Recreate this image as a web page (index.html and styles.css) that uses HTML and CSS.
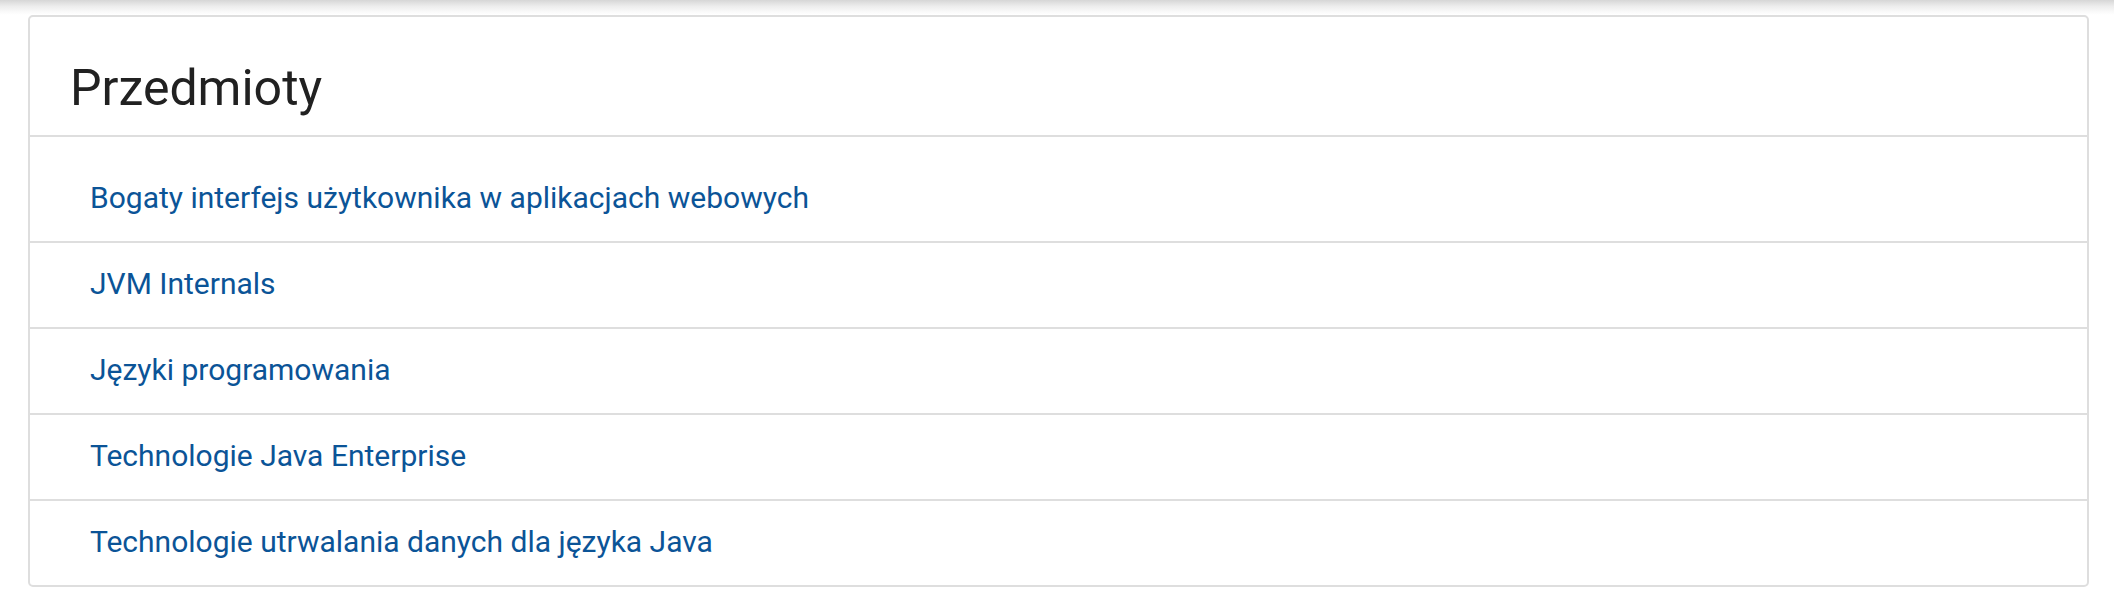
FILE: index.html
```html
<!DOCTYPE html>
<html lang="pl">
<head>
<meta charset="utf-8">
<title>Przedmioty</title>
<link rel="stylesheet" href="styles.css">
</head>
<body>
<div class="topshade"></div>
<main class="page">
  <section class="card">
    <header class="card-header">
      <h3 class="card-title">Przedmioty</h3>
    </header>
    <ul class="list">
      <li class="list-item"><a class="list-link" href="#">Bogaty interfejs użytkownika w aplikacjach webowych</a></li>
      <li class="list-item"><a class="list-link" href="#">JVM Internals</a></li>
      <li class="list-item"><a class="list-link" href="#">Języki programowania</a></li>
      <li class="list-item"><a class="list-link" href="#">Technologie Java Enterprise</a></li>
      <li class="list-item"><a class="list-link" href="#">Technologie utrwalania danych dla języka Java</a></li>
    </ul>
  </section>
</main>
</body>
</html>
```

FILE: styles.css
```css
html, body {
  margin: 0;
  padding: 0;
  background: #ffffff;
  font-family: Roboto, "Noto Sans", "Liberation Sans", sans-serif;
}

.topshade {
  height: 15px;
  background: linear-gradient(to bottom, #d6d6d6 0%, #ececec 40%, #fafafa 80%, #ffffff 100%);
}

.page {
  padding: 0 25px 0 28px;
}

.card {
  border: 2px solid #dedede;
  border-radius: 5px;
  background: #ffffff;
}

.card-header {
  padding: 41px 40px 17px 40px;
  border-bottom: 2px solid #dedede;
}

.card-title {
  margin: 0;
  font-size: 50px;
  line-height: 60px;
  font-weight: 400;
  color: #212121;
}

.list {
  list-style: none;
  margin: 0;
  padding: 20px 0 0 0;
}

.list-item {
  padding: 19px 60px 21px 60px;
  border-bottom: 2px solid #dedede;
  font-size: 30px;
  line-height: 44px;
}

.list-item:last-child {
  border-bottom: none;
}

.list-link {
  color: #0b5497;
  text-decoration: none;
}
```
